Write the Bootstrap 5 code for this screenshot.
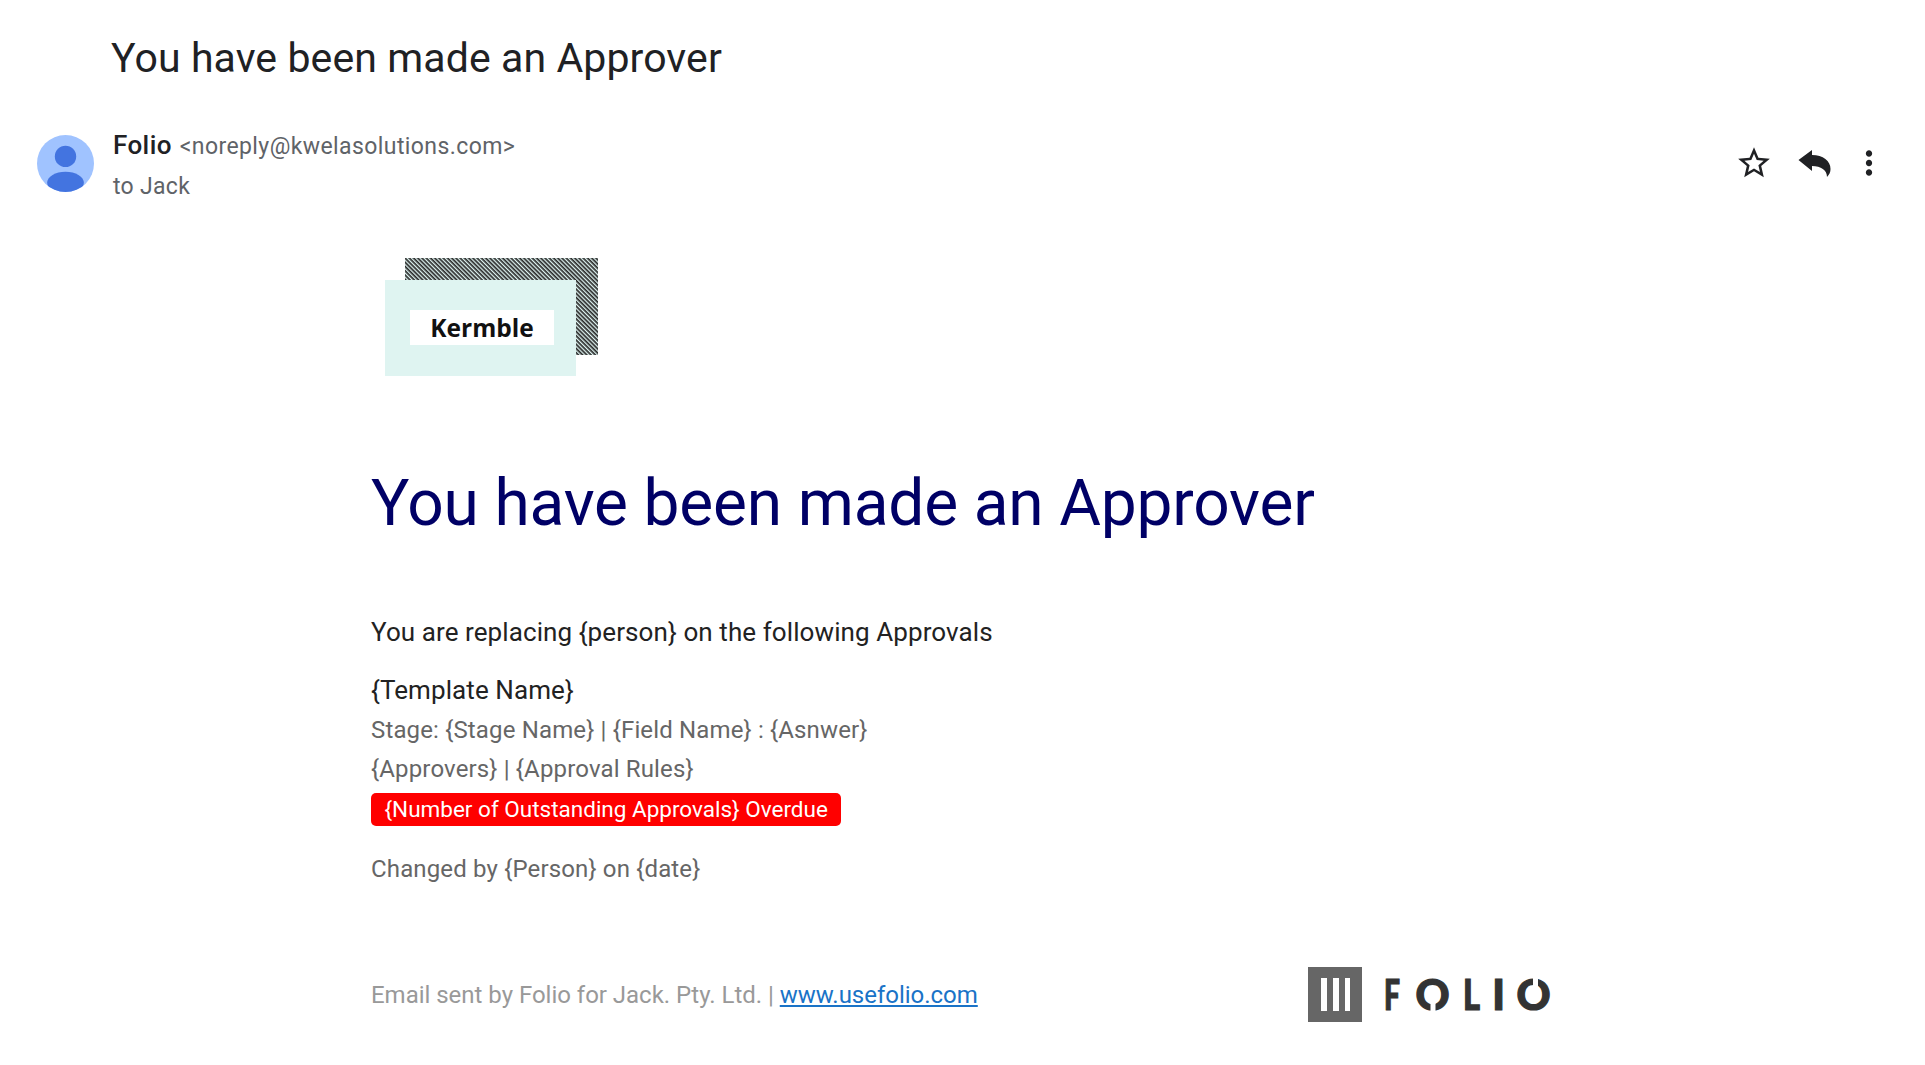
<!DOCTYPE html>
<html lang="en">
<head>
<meta charset="utf-8">
<title>You have been made an Approver</title>
<link href="https://cdn.jsdelivr.net/npm/bootstrap@5.3.0/dist/css/bootstrap.min.css" rel="stylesheet">
<style>
html,body{height:100%;}
body{font-family:Roboto,"Liberation Sans",sans-serif;color:#222;background:#fff;overflow:hidden;}
.mail-subject{font-size:41px;font-weight:400;line-height:46px;letter-spacing:.1px;margin:0;padding:35px 0 0 111px;color:#202124;}
.sender-row{padding:47px 37px 0 37px;}
.avatar-ic{width:57px;height:57px;flex:none;}
.sender-txt{margin-left:19px;}
.sender-name{font-size:26px;font-weight:500;line-height:34px;color:#202124;letter-spacing:.4px;}
.sender-mail{font-size:23px;font-weight:400;color:#5f6368;letter-spacing:.41px;margin-left:1px;}
.sender-to{font-size:23px;line-height:30px;color:#5f6368;margin-top:8px;letter-spacing:.3px;}
.act-ic{display:block;}
.act-reply{margin-left:22px;}
.act-more{margin-left:15px;}
.mail-body{padding:56px 0 0 371px;}
.kermble-logo{display:block;margin-left:14px;}
.hero-title{font-size:64px;line-height:76px;font-weight:400;letter-spacing:-.17px;color:#000066;margin:88px 0 0 0;}
.lead-line{font-size:26px;line-height:34px;letter-spacing:.09px;color:#222;margin:73px 0 0 0;}
.tmpl-name{font-size:26px;line-height:34px;letter-spacing:.09px;color:#222;margin:24px 0 4px 0;}
.meta-line{font-size:24px;line-height:39px;letter-spacing:.15px;color:#666;margin:0;}
.overdue-pill{display:inline-block;background:#f00;color:#fff;font-size:22.5px;line-height:33px;padding:0 13.5px;border-radius:5px;margin-top:4px;vertical-align:top;}
.changed-line{margin-top:24px;}
.foot-row{margin-top:78px;width:1182px;}
.foot-txt{font-size:24px;color:#999;letter-spacing:-.02px;}
.foot-txt a{color:#1a73c7;}
.folio-txt{font-family:Lato,"Liberation Sans",sans-serif;font-weight:900;font-size:42px;fill:#333;stroke:#333;stroke-width:1.2px;text-anchor:middle;}
.kerm-txt{font-family:"Open Sans","Liberation Sans",sans-serif;font-weight:700;font-size:24.5px;fill:#111;}
</style>
</head>
<body>
<h1 class="mail-subject">You have been made an Approver</h1>
<div class="sender-row d-flex align-items-center">
  <svg class="avatar-ic mb-1" viewBox="0 0 56 56" aria-hidden="true">
    <defs><clipPath id="av"><circle cx="28" cy="28" r="28"/></clipPath></defs>
    <circle cx="28" cy="28" r="28" fill="#a0c3ff"/>
    <g clip-path="url(#av)" fill="#4374e0">
      <circle cx="28" cy="21" r="10.5"/>
      <ellipse cx="28" cy="47" rx="18" ry="11"/>
    </g>
  </svg>
  <div class="sender-txt flex-grow-1">
    <div class="sender-name">Folio <span class="sender-mail">&lt;noreply@kwelasolutions.com&gt;</span></div>
    <div class="sender-to">to Jack</div>
  </div>
  <div class="d-flex align-items-center mb-1">
    <svg class="act-ic" width="38" height="38" viewBox="0 0 24 24" aria-hidden="true"><path fill="#202124" d="M22 9.24l-7.19-.62L12 2 9.19 8.63 2 9.24l5.46 4.73L5.82 21 12 17.27 18.18 21l-1.63-7.03L22 9.24zM12 15.4l-3.76 2.27 1-4.28-3.32-2.88 4.38-.38L12 6.1l1.71 4.04 4.38.38-3.32 2.88 1 4.28L12 15.4z"/></svg>
    <svg class="act-ic act-reply" width="40" height="32" viewBox="0 0 40 32" aria-hidden="true"><path fill="#202124" d="M3.500 13L17 3V8C28 8 35.500 14 35.500 22C35.500 25 34.500 27.500 32 30C32 23 26 19 17 19V24Z"/></svg>
    <svg class="act-ic act-more" width="38" height="38" viewBox="0 0 24 24" aria-hidden="true"><path fill="#202124" d="M12 8c1.100 0 2-.9 2-2s-.9-2-2-2-2 .9-2 2 .9 2 2 2zm0 2c-1.100 0-2 .9-2 2s.9 2 2 2 2-.9 2-2-.9-2-2-2zm0 6c-1.100 0-2 .9-2 2s.9 2 2 2 2-.9 2-2-.9-2-2-2z"/></svg>
  </div>
</div>
<main class="mail-body">
  <svg class="kermble-logo" width="215" height="120" viewBox="0 0 215 120">
    <defs>
      <pattern id="hatch" width="3" height="3" patternUnits="userSpaceOnUse" patternTransform="rotate(45)">
        <rect width="3" height="3" fill="#dff4f1"/>
        <rect width="3" height="1.7" fill="#2a2a2a"/>
      </pattern>
    </defs>
    <rect x="20" y="0" width="193" height="97" fill="url(#hatch)"/>
    <rect x="0" y="22" width="191" height="96" fill="#dff4f1"/>
    <rect x="25" y="52" width="144" height="35" fill="#fff"/>
    <text class="kerm-txt" x="97" y="79" text-anchor="middle">Kermble</text>
  </svg>
  <h2 class="hero-title">You have been made an Approver</h2>
  <p class="lead-line">You are replacing {person} on the following Approvals</p>
  <p class="tmpl-name">{Template Name}</p>
  <p class="meta-line">Stage: {Stage Name} | {Field Name} : {Asnwer}</p>
  <p class="meta-line">{Approvers} | {Approval Rules}</p>
  <span class="overdue-pill">{Number of Outstanding Approvals} Overdue</span>
  <p class="meta-line changed-line">Changed by {Person} on {date}</p>
  <div class="foot-row d-flex align-items-center justify-content-between">
    <div class="foot-txt">Email sent by Folio for Jack. Pty. Ltd. | <a href="#">www.usefolio.com</a></div>
    <svg width="245" height="56" viewBox="0 0 245 56">
      <rect x="0" y="0" width="54" height="55" fill="#666"/>
      <rect x="13" y="11" width="6" height="33" fill="#fff"/>
      <rect x="25" y="11" width="6" height="33" fill="#fff"/>
      <rect x="37" y="11" width="5" height="33" fill="#fff"/>
      <text class="folio-txt" x="84" y="43" textLength="16" lengthAdjust="spacingAndGlyphs">F</text>
      <text class="folio-txt" x="124.500" y="43">O</text>
      <rect x="122.500" y="33" width="5" height="13" fill="#fff"/>
      <text class="folio-txt" x="163.500" y="43" textLength="17" lengthAdjust="spacingAndGlyphs">L</text>
      <text class="folio-txt" x="190.500" y="43">I</text>
      <text class="folio-txt" x="225.500" y="43">O</text>
      <rect x="225" y="9" width="5" height="13" fill="#fff"/>
    </svg>
  </div>
</main>
<script src="https://cdn.jsdelivr.net/npm/bootstrap@5.3.0/dist/js/bootstrap.bundle.min.js"></script>
</body>
</html>
